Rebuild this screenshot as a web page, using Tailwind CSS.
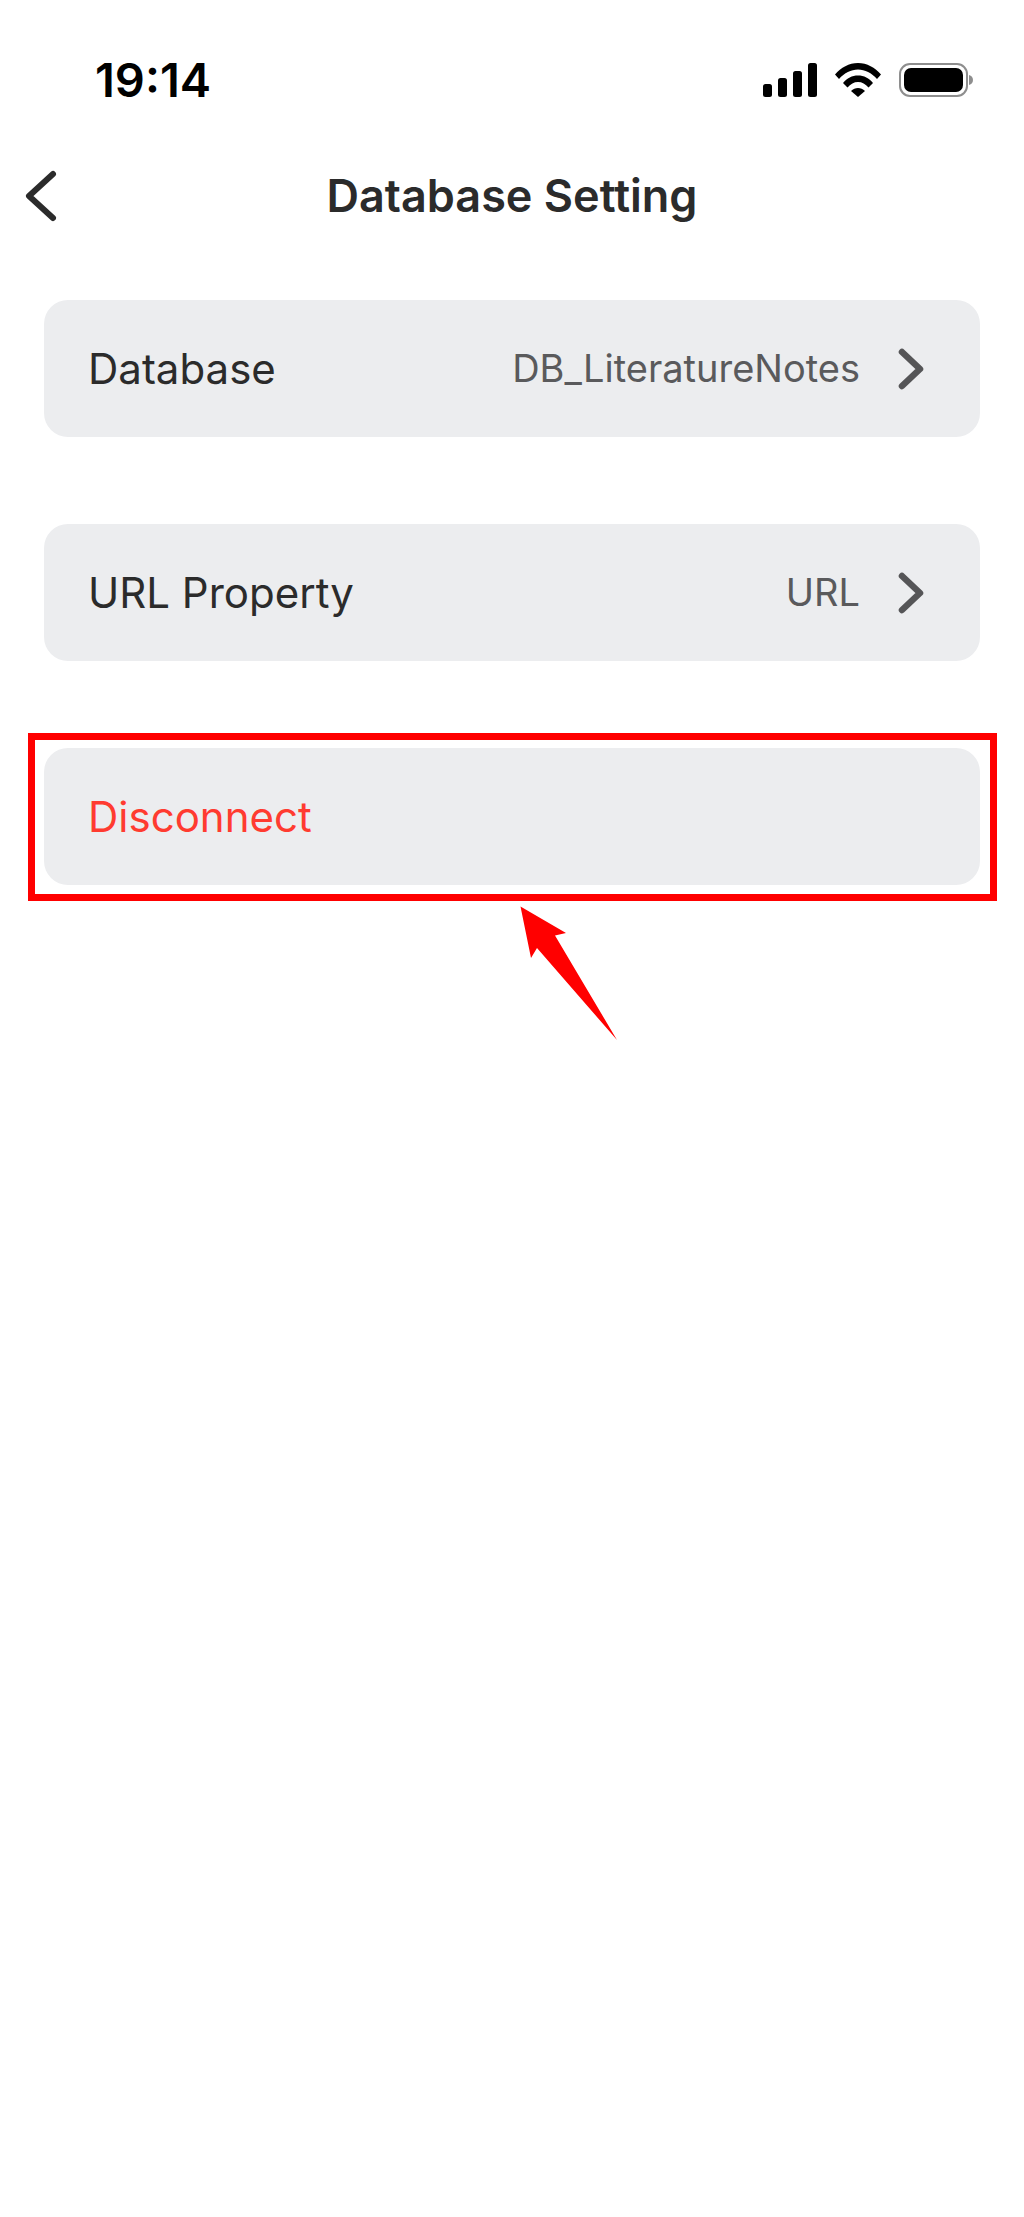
<!DOCTYPE html>
<html lang="en">
<head>
    <meta charset="UTF-8">
    <meta name="viewport" content="width=device-width, initial-scale=1.0">
    <title>Database Setting</title>
    <script src="https://cdn.jsdelivr.net/npm/@tailwindcss/browser@4"></script>
</head>
<body class="bg-white font-['Inter',sans-serif]">
    <div class="relative w-[1024px] h-[2217px] overflow-hidden bg-white">

        <!-- status bar -->
        <div class="flex justify-between items-start h-[138px] pl-[95px] pr-[50px] pt-[52px]">
            <span class="text-[47px] leading-[56px] font-semibold text-black">19:14</span>
            <div class="flex items-start gap-[18px] pt-[11px]">
                <svg width="54" height="34" viewBox="0 0 54 34" fill="#000">
                    <rect x="0" y="21" width="9" height="13" rx="2.5"/>
                    <rect x="15" y="15" width="9" height="19" rx="2.5"/>
                    <rect x="30" y="8" width="9" height="26" rx="2.5"/>
                    <rect x="45" y="0" width="9" height="34" rx="2.5"/>
                </svg>
                <svg width="46" height="34" viewBox="0 0 46 34" fill="#000">
                    <path d="M0 11.5C6 4.5 14 0 23 0s17 4.500 23 11.500l-4 4.500C36.500 10 30 6.500 23 6.500S9.500 10 4 16z"/>
                    <path d="M8 20C12 15 17 12.500 23 12.500S34 15 38 20l-4.500 4.500C30.500 21 27 19 23 19s-7.500 2-10.500 5.500z"/>
                    <path d="M16 28c2-2 4.500-3 7-3s5 1 7 3l-7 6z"/>
                </svg>
                <svg width="75" height="34" viewBox="0 0 75 34">
                    <rect x="1" y="1" width="67" height="32" rx="10" fill="none" stroke="#8e8e8e" stroke-width="2"/>
                    <rect x="5" y="5" width="59" height="24" rx="7" fill="#000"/>
                    <path d="M70 12c2.500 .5 4 2.500 4 5s-1.500 4.500-4 5z" fill="#8e8e8e"/>
                </svg>
            </div>
        </div>

        <!-- header -->
        <div class="relative flex items-center justify-center h-[116px]">
            <svg class="absolute left-[22px] top-[27px]" width="38" height="60" viewBox="0 0 38 60" fill="none" stroke="#2b2b2b" stroke-width="6" stroke-linecap="round" stroke-linejoin="round">
                <path d="M31 9 L7 31 L31 53"/>
            </svg>
            <h1 class="text-[45px] leading-[56px] font-semibold text-[#2b2b2b]">Database Setting</h1>
        </div>

        <!-- settings rows -->
        <div class="flex flex-col mx-[44px] mt-[46px]">
            <div class="flex items-center justify-between h-[137px] pl-[44px] pr-[56px] rounded-[24px] bg-[#ecedef]">
                <span class="text-[42px] text-[#2b2b2b]">Database</span>
                <div class="flex items-center gap-[38px]">
                    <span class="text-[38px] text-[#5a5a5c]">DB_LiteratureNotes</span>
                    <svg width="26" height="42" viewBox="0 0 26 42" fill="none" stroke="#555557" stroke-width="6.500" stroke-linecap="round" stroke-linejoin="round">
                        <path d="M4 4 L22 21 L4 38"/>
                    </svg>
                </div>
            </div>

            <div class="flex items-center justify-between h-[137px] mt-[87px] pl-[44px] pr-[56px] rounded-[24px] bg-[#ecedef]">
                <span class="text-[42px] text-[#2b2b2b]">URL Property</span>
                <div class="flex items-center gap-[38px]">
                    <span class="text-[38px] text-[#5a5a5c]">URL</span>
                    <svg width="26" height="42" viewBox="0 0 26 42" fill="none" stroke="#555557" stroke-width="6.500" stroke-linecap="round" stroke-linejoin="round">
                        <path d="M4 4 L22 21 L4 38"/>
                    </svg>
                </div>
            </div>

            <div class="flex items-center h-[137px] mt-[87px] pl-[44px] rounded-[24px] bg-[#ecedef]">
                <span class="text-[42px] text-[#ff3b30]">Disconnect</span>
            </div>
        </div>

        <!-- annotation over the screenshot -->
        <div class="absolute left-[28px] top-[733px] w-[969px] h-[168px] border-[7px] border-[#ff0000]"></div>
        <svg class="absolute left-[500px] top-[890px]" width="130" height="160" viewBox="500 890 130 160" fill="#ff0000">
            <polygon points="520.500,906.500 566,933 555,935.500 617,1040 537,948 531,958"/>
        </svg>
    </div>
</body>
</html>
